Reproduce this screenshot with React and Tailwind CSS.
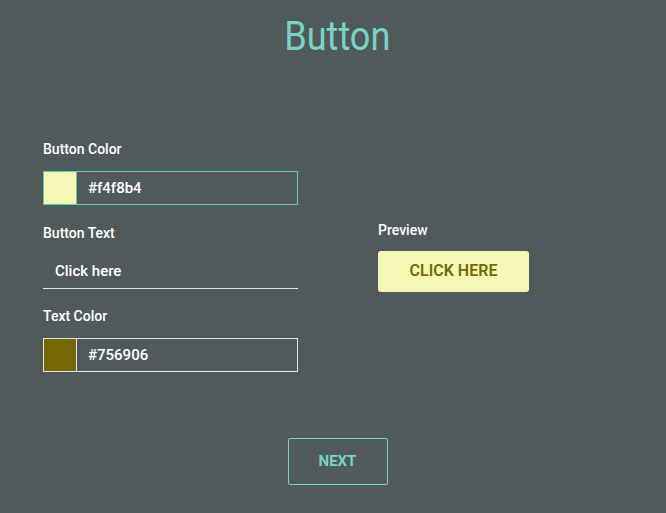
import { useState } from 'react';

function ColorField({ label, value, focused }) {
  return (
    <div>
      <label className="block h-5 text-sm font-medium leading-5 text-white">{label}</label>
      <div
        className={
          focused
            ? 'mt-3 flex h-[34px] w-[255px] border border-[#5fc8b1]'
            : 'mt-3 flex h-[34px] w-[255px] border border-[#e4e7e7]'
        }
      >
        <div className="w-[33px] border-r border-inherit" style={{ backgroundColor: value }} />
        <div className="flex items-center pl-[11px] text-[15px] font-medium text-white">{value}</div>
      </div>
    </div>
  );
}

export default function App() {
  const [btnColor] = useState('#f4f8b4');
  const [textColor] = useState('#756906');
  const [btnText] = useState('Click here');

  return (
    <div className="flex min-h-screen flex-col items-center bg-[#505a5b] font-['Roboto',sans-serif]">
      {/* Title */}
      <h1 className="ml-[9px] mt-[12px] inline-block h-[48px] origin-center scale-x-[0.88] text-[41px] leading-[48px] text-[#78d3c2]">
        Button
      </h1>

      {/* Form + preview */}
      <div className="mt-[79px] flex w-full items-center pl-[43px]">
        <div className="w-[255px]">
          <ColorField label="Button Color" value={btnColor} focused />

          <label className="mt-[18px] block h-5 text-sm font-medium leading-5 text-white">Button Text</label>
          <div className="mt-[11px] flex h-[35px] w-[255px] items-center border-b border-[#e4e7e7] pl-[12px] text-[15px] font-medium text-white">
            {btnText}
          </div>

          <div className="mt-[17px]">
            <ColorField label="Text Color" value={textColor} />
          </div>
        </div>

        <div className="ml-[80px]">
          <label className="block h-5 text-sm font-medium leading-5 text-white">Preview</label>
          <button
            className="mt-[11px] flex h-[41px] w-[151px] items-center justify-center rounded-[3px] text-base font-semibold uppercase"
            style={{ backgroundColor: btnColor, color: textColor }}
          >
            {btnText}
          </button>
        </div>
      </div>

      {/* Next */}
      <button className="ml-[9px] mt-[66px] flex h-[47px] w-[100px] items-center justify-center rounded-[2px] border border-[#78d3c2] text-[15px] font-bold text-[#78d3c2]">
        NEXT
      </button>
    </div>
  );
}
